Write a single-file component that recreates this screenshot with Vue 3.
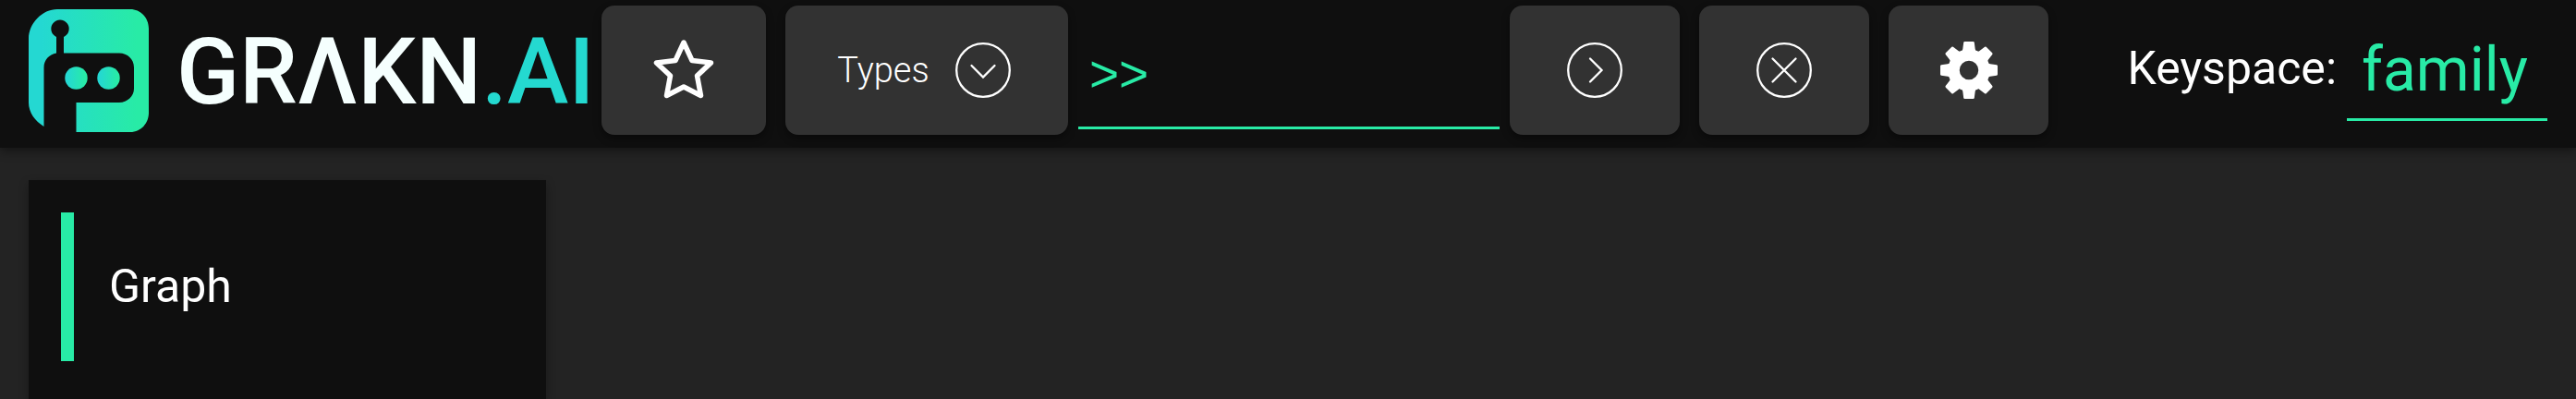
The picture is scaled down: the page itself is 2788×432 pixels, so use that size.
<script setup>
import { ref } from 'vue'

const query = ref('>>')
const keyspace = ref('family')
const teeth = [0, 45, 90, 135, 180, 225, 270, 315]
</script>

<template>
  <div class="page">
    <header class="topbar">
      <a class="brand" href="#" aria-label="GRΛKN.AI">
        <svg class="robot" viewBox="0 0 130 133" aria-hidden="true">
          <defs>
            <linearGradient id="mint" x1="0" y1="0" x2="1" y2="0">
              <stop offset="0.1" stop-color="#24d8d2" />
              <stop offset="0.9" stop-color="#28eba6" />
            </linearGradient>
          </defs>
          <path
            fill="url(#mint)"
            fill-rule="evenodd"
            d="M0 32C0 15 15 0 31 0H110C121 0 130 9 130 21V112C130 123 122 133 110 133H51.500V101H98C107 101 114 94 114 86V63C114 54 107 47.500 98 47.500H38V30A9.700 9.700 0 1 0 30 30V47.500C22 49 16.500 55 16.500 63V127C7 121 0 112 0 101Z"
          />
          <circle cx="51.5" cy="74.500" r="12.200" fill="url(#mint)" />
          <circle cx="86.500" cy="74.500" r="12.200" fill="url(#mint)" />
        </svg>
        <span class="wordmark">GRΛKN<span class="suffix">.AI</span></span>
      </a>

      <div class="group">
        <button class="tile star" type="button" aria-label="Saved queries">
          <svg width="68" height="66" viewBox="0 0 68 66" aria-hidden="true">
            <path
              d="M34 3 43 22.500 63.500 25 48.500 39 52.500 60.500 34 51 15.500 60.500 19.500 39 4.500 25 25 22.500Z"
              fill="none" stroke="#fff" stroke-width="5.500" stroke-linejoin="round"
            />
          </svg>
        </button>
        <button class="tile types" type="button">
          Types
          <svg width="60" height="60" viewBox="0 0 60 60" aria-hidden="true">
            <g fill="none" stroke="#fff" stroke-width="2.300">
              <circle cx="30" cy="30" r="28.800" />
              <path d="M17.500 25 30 37.500 42.500 25" stroke-linecap="round" />
            </g>
          </svg>
        </button>
      </div>

      <input v-model="query" class="query" type="text" aria-label="Query" />

      <div class="group">
        <button class="tile action" type="button" aria-label="Run query">
          <svg width="60" height="60" viewBox="0 0 60 60" aria-hidden="true">
            <g fill="none" stroke="#fff" stroke-width="2.300">
              <circle cx="30" cy="30" r="28.800" />
              <path d="M25 17.500 37.500 30 25 42.500" stroke-linecap="round" />
            </g>
          </svg>
        </button>
        <button class="tile action" type="button" aria-label="Clear graph">
          <svg width="60" height="60" viewBox="0 0 60 60" aria-hidden="true">
            <g fill="none" stroke="#fff" stroke-width="2.300">
              <circle cx="30" cy="30" r="28.800" />
              <path d="M17.500 17.500 42.500 42.500M42.500 17.500 17.500 42.500" stroke-linecap="round" />
            </g>
          </svg>
        </button>
        <button class="tile settings" type="button" aria-label="Settings">
          <svg width="62" height="62" viewBox="-31 -31 62 62" aria-hidden="true">
            <circle r="16.500" fill="none" stroke="#fff" stroke-width="12.500" />
            <path
              v-for="angle in teeth"
              :key="angle"
              :transform="`rotate(${angle})`"
              d="M-9 -19Q-7 -20 -6.700 -23L-5.800 -30Q-5.600 -31 -4.600 -31H4.600Q5.600 -31 5.800 -30L6.700 -23Q7 -20 9 -19Z"
              fill="#fff"
            />
          </svg>
        </button>
      </div>

      <div class="keyspace">
        <label for="keyspace">Keyspace:</label>
        <select id="keyspace" v-model="keyspace">
          <option value="family">family</option>
        </select>
      </div>
    </header>

    <nav class="sidebar">
      <a class="item" href="#">Graph</a>
    </nav>
  </div>
</template>

<style>
body {
  background: #232323;
}
</style>

<style scoped>
.page {
  display: flex;
  flex-direction: column;
  min-height: 100vh;
  overflow: hidden;
  color: #fff;
  font-family: Roboto, "Liberation Sans", sans-serif;
  font-weight: 400;
}

.page * {
  box-sizing: border-box;
}

.topbar {
  display: flex;
  align-items: flex-start;
  gap: 11px;
  height: 160px;
  padding: 6px 31px 0;
  background: #0f0f0f;
  box-shadow: 0 4px 10px rgba(0, 0, 0, 0.4);
}

.brand {
  display: flex;
  flex: none;
  align-items: center;
  gap: 30px;
  width: 609px;
  height: 140px;
  color: #f5fffe;
  text-decoration: none;
  white-space: nowrap;
}

.robot {
  flex: none;
  width: 130px;
  height: 133px;
}

.wordmark {
  padding-top: 4px;
  font-size: 100px;
  font-weight: 500;
  line-height: 140px;
}

.suffix {
  color: #24d9d0;
}

.group {
  display: flex;
  flex: none;
  gap: 21px;
}

.tile {
  display: flex;
  align-items: center;
  justify-content: center;
  height: 140px;
  padding: 0;
  border: 0;
  border-radius: 14px;
  background: #323232;
  box-shadow: 0 4px 8px rgba(0, 0, 0, 0.4);
  color: #fff;
  font: inherit;
}

.star {
  width: 178px;
}

.types {
  gap: 28px;
  width: 306px;
  padding-right: 6px;
  font-size: 38px;
  font-weight: 300;
}

.action {
  width: 184px;
}

.settings {
  width: 173px;
}

.query {
  flex: 1;
  min-width: 0;
  height: 134px;
  padding: 16px 12px 0;
  border: 0;
  border-bottom: 3px solid #28eba6;
  border-radius: 0;
  outline: 0;
  background: transparent;
  color: #28eba6;
  font: 400 55px "Liberation Sans", sans-serif;
}

.keyspace {
  display: flex;
  flex: none;
  justify-content: flex-end;
  gap: 11px;
  width: 529px;
  font-size: 50px;
  line-height: 136px;
}

.keyspace select {
  width: 217px;
  height: 125px;
  padding: 18px 16px 0;
  appearance: none;
  border: 0;
  border-bottom: 3px solid #28eba6;
  border-radius: 0;
  background: transparent;
  color: #28eba6;
  font: inherit;
  font-size: 66px;
  line-height: 78px;
}

.sidebar {
  flex: 1;
  width: 560px;
  margin: 35px 0 0 31px;
  padding: 35px;
  background: #0f0f0f;
  box-shadow: 0 4px 10px rgba(0, 0, 0, 0.3);
}

.item {
  display: block;
  padding-left: 38px;
  border-left: 14px solid #28eba6;
  color: #fff;
  font-size: 50px;
  line-height: 161px;
  text-decoration: none;
}
</style>
